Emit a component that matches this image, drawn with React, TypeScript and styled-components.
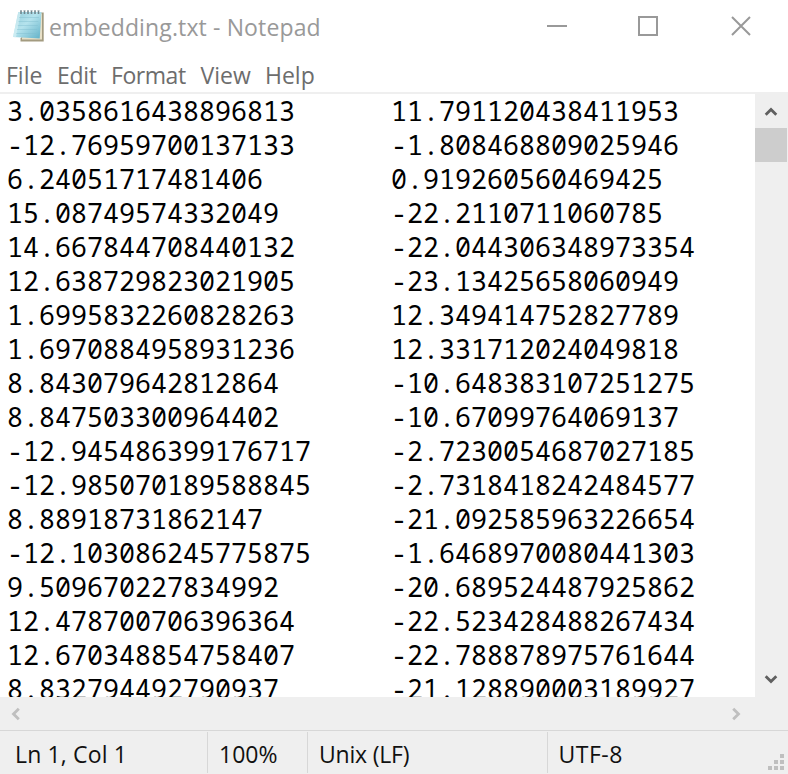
import React from "react";
import styled, { createGlobalStyle } from "styled-components";

const GlobalStyle = createGlobalStyle`
  * { box-sizing: border-box; }
  body { margin: 0; background: #fff; overflow: hidden; }
`;

const Window = styled.div`
  display: flex;
  flex-direction: column;
  width: 788px;
  height: 774px;
  background: #fff;
  overflow: hidden;
  font-family: "Open Sans", "Noto Sans", sans-serif;
  font-size: 23px;
  line-height: 32px;
  white-space: pre;
`;

const TitleBar = styled.header`
  display: flex;
  flex: none;
  height: 59px;
  padding-left: 12px;
  color: #999;
`;

const AppIcon = styled.svg`
  flex: none;
  width: 34px;
  height: 34px;
  margin-top: 9px;
`;

const Title = styled.h1`
  flex: 1;
  margin: 11px 0 0 3px;
  font-size: 23px;
  font-weight: 400;
  letter-spacing: 0.13px;
`;

const Controls = styled.div`
  display: flex;
  padding: 15px 36px 0 0;
`;

const ControlIcon = styled.svg<{ $gap: number }>`
  width: 22px;
  height: 22px;
  margin-right: ${(p) => p.$gap}px;
  fill: none;
  stroke: #999;
  stroke-width: 2;
`;

const MenuBar = styled.nav`
  display: flex;
  flex: none;
  height: 35px;
  padding-left: 6px;
  border-bottom: 2px solid #efefef;
  color: #6d6d6d;
`;

const MenuItem = styled.span<{ $width: number; $spacing: number }>`
  flex: none;
  width: ${(p) => p.$width}px;
  letter-spacing: ${(p) => p.$spacing}px;
`;

const Body = styled.main`
  display: flex;
  flex: none;
  height: 603px;
`;

const Editor = styled.div`
  width: 755px;
  height: 603px;
  padding-left: 7px;
  overflow: hidden;
  color: #000;
  font: 26.667px/34px "Noto Sans Mono", "DejaVu Sans Mono", monospace;
  font-feature-settings: "zero" 1;
`;

const DataRow = styled.div`
  display: grid;
  grid-template-columns: 384px 1fr;
  height: 34px;
`;

const VScroll = styled.div`
  display: flex;
  flex-direction: column;
  width: 33px;
  background: #efefef;
`;

const Thumb = styled.div`
  width: 32px;
  height: 34px;
  background: #cdcdcd;
`;

const ScrollButton = styled.div<{ $end?: boolean }>`
  display: flex;
  width: 32px;
  height: 34px;
  align-items: center;
  justify-content: center;
  margin-top: ${(p) => (p.$end ? "auto" : "0")};
  padding: ${(p) => (p.$end ? "0 0 2px" : "2px 0 0")};
`;

const HScrollButton = styled.div`
  display: flex;
  width: 32px;
  height: 33px;
  align-items: center;
  justify-content: center;
`;

const Arrow = styled.svg<{ $turn: number; $faint?: boolean }>`
  width: 14px;
  height: 14px;
  fill: none;
  stroke: ${(p) => (p.$faint ? "#bfbfbf" : "#606060")};
  stroke-width: 2.8;
  transform: rotate(${(p) => p.$turn}deg);
`;

const HScroll = styled.div`
  display: flex;
  flex: none;
  justify-content: space-between;
  width: 788px;
  height: 33px;
  padding-right: 36px;
  background: #efefef;
`;

const StatusBar = styled.footer`
  display: flex;
  flex: none;
  height: 44px;
  padding-top: 1px;
  border-top: 1px solid #d7d7d7;
  background: #efefef;
  color: #111;
`;

const StatusCell = styled.div<{ $width: number; $pad: number; $spacing: number }>`
  flex: none;
  width: ${(p) => p.$width}px;
  height: 41px;
  padding: 6px 0 0 ${(p) => p.$pad}px;
  border-right: 1px solid #d7d7d7;
  letter-spacing: ${(p) => p.$spacing}px;

  &:last-of-type { border-right: 0; }
`;

const Grip = styled.svg`
  width: 16px;
  height: 16px;
  margin-top: 22px;
  fill: #bfbfbf;
`;

const rows = [
  ["3.0358616438896813", "11.791120438411953"],
  ["-12.76959700137133", "-1.808468809025946"],
  ["6.24051717481406", "0.919260560469425"],
  ["15.08749574332049", "-22.2110711060785"],
  ["14.667844708440132", "-22.044306348973354"],
  ["12.638729823021905", "-23.13425658060949"],
  ["1.6995832260828263", "12.349414752827789"],
  ["1.6970884958931236", "12.331712024049818"],
  ["8.843079642812864", "-10.648383107251275"],
  ["8.847503300964402", "-10.67099764069137"],
  ["-12.945486399176717", "-2.7230054687027185"],
  ["-12.985070189588845", "-2.7318418242484577"],
  ["8.88918731862147", "-21.092585963226654"],
  ["-12.103086245775875", "-1.6468970080441303"],
  ["9.509670227834992", "-20.689524487925862"],
  ["12.478700706396364", "-22.523428488267434"],
  ["12.670348854758407", "-22.788878975761644"],
  ["8.832794492790937", "-21.128890003189927"],
];

const Chevron = ({ turn, faint }: { turn: number; faint?: boolean }) => (
  <Arrow $turn={turn} $faint={faint} viewBox="0 0 14 14">
    <path d="M1.7 9.8 7 4.5l5.3 5.3" />
  </Arrow>
);

const NotepadIcon = () => (
  <AppIcon viewBox="0 0 34 34">
    <defs>
      <linearGradient id="page" x1="0" y1="0" x2="1" y2="1">
        <stop offset="0" stopColor="#8fcbd9" />
        <stop offset="0.45" stopColor="#b5e3ed" />
        <stop offset="1" stopColor="#5fb0c7" />
      </linearGradient>
    </defs>
    <path d="M28 3.5h3.7v29H8.5v-3z" fill="#a39b80" />
    <path d="M28 4.5h2v26H10v-2z" fill="#e8e0c7" />
    <path d="M6.3 3H29.5L27.7 29.5 1 28z" fill="url(#page)" />
    <path d="M6.3 3 1 28l3 .2L9 3z" fill="#d8f1f6" opacity=".65" />
    <path d="M7 8.5h20M6.4 12.5h20M5.8 16.5h20M5 20.5h20M4.2 24.5h20" stroke="#7fbdce" strokeWidth=".7" opacity=".6" />
    <path d="M9 5V2M12.5 5V2M16 5V2M19.5 5V2M23 5V2M26.5 5V2" stroke="#6f858d" strokeWidth="1.6" />
    <path d="M8 1.5h20" stroke="#a9b6bb" strokeWidth="1" strokeDasharray="2 1.5" />
  </AppIcon>
);

export default function App() {
  return (
    <Window>
      <GlobalStyle />
      <TitleBar>
        <NotepadIcon />
        <Title>embedding.txt - Notepad</Title>
        <Controls>
          <ControlIcon $gap={69} viewBox="0 0 22 22"><path d="M1 11h20" /></ControlIcon>
          <ControlIcon $gap={71} viewBox="0 0 22 22"><path d="M2 2h18v18H2z" /></ControlIcon>
          <ControlIcon $gap={0} viewBox="0 0 22 22"><path d="M2 2l18 18M20 2 2 20" /></ControlIcon>
        </Controls>
      </TitleBar>
      <MenuBar>
        <MenuItem $width={51} $spacing={0}>File</MenuItem>
        <MenuItem $width={54} $spacing={-0.3}>Edit</MenuItem>
        <MenuItem $width={89.5} $spacing={-0.45}>Format</MenuItem>
        <MenuItem $width={64.5} $spacing={0}>View</MenuItem>
        <MenuItem $width={60} $spacing={0}>Help</MenuItem>
      </MenuBar>
      <Body>
        <Editor>
          {rows.map(([a, b]) => (
            <DataRow key={a}><span>{a}</span><span>{b}</span></DataRow>
          ))}
        </Editor>
        <VScroll>
          <ScrollButton><Chevron turn={0} /></ScrollButton>
          <Thumb />
          <ScrollButton $end><Chevron turn={180} /></ScrollButton>
        </VScroll>
      </Body>
      <HScroll>
        <HScrollButton><Chevron turn={-90} faint /></HScrollButton>
        <HScrollButton><Chevron turn={90} faint /></HScrollButton>
      </HScroll>
      <StatusBar>
        <StatusCell $width={208} $pad={15} $spacing={0.15}>Ln 1, Col 1</StatusCell>
        <StatusCell $width={100} $pad={11} $spacing={0}>100%</StatusCell>
        <StatusCell $width={240} $pad={11} $spacing={-0.2}>Unix (LF)</StatusCell>
        <StatusCell $width={220} $pad={10.5} $spacing={0.5}>UTF-8</StatusCell>
        <Grip viewBox="0 0 16 16">
          <path d="M12 0h4v4h-4zM6 6h4v4H6zM12 6h4v4h-4zM0 12h4v4H0zM6 12h4v4H6zM12 12h4v4h-4z" />
        </Grip>
      </StatusBar>
    </Window>
  );
}
